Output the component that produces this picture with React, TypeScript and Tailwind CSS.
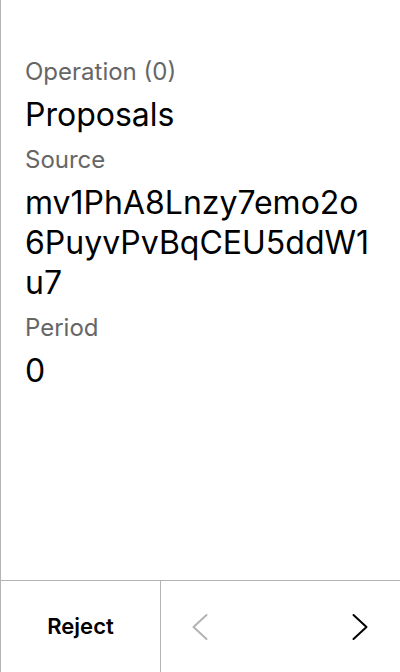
const Field = ({ label, value }: { label: string; value: string }) => (
  <div>
    <div className="text-[24px] leading-[30px] text-[#666666] mb-[8px]">{label}</div>
    <div className="text-[32px] leading-[40px] text-black break-all mb-[10px]">{value}</div>
  </div>
);

const Chevron = ({ dir, color }: { dir: "left" | "right"; color: string }) => (
  <svg width="16" height="28" viewBox="0 0 16 28" fill="none">
    <polyline
      points={dir === "left" ? "14.5,2 1.5,14 14.5,26" : "1.5,2 14.5,14 1.5,26"}
      stroke={color}
      strokeWidth="2"
      strokeLinecap="round"
      strokeLinejoin="round"
    />
  </svg>
);

export default function App() {
  return (
    <div
      className="h-[672px] w-[400px] flex flex-col bg-white border-l border-[#b3b3b3]"
      style={{ fontFamily: "Inter, 'Noto Sans', sans-serif" }}
    >
      <div className="flex-1 px-[24px] pt-[57px]">
        <Field label="Operation (0)" value="Proposals" />
        <Field label="Source" value="mv1PhA8Lnzy7emo2o6PuyvPvBqCEU5ddW1u7" />
        <Field label="Period" value="0" />
      </div>
      <div className="h-[92px] flex border-t border-[#b3b3b3]">
        <button className="w-[160px] border-r border-[#b3b3b3] text-[22px] font-semibold text-black">
          Reject
        </button>
        <div className="flex-1 flex items-center justify-between pl-[31px] pr-[32px]">
          <Chevron dir="left" color="#b3b3b3" />
          <Chevron dir="right" color="#000000" />
        </div>
      </div>
    </div>
  );
}
